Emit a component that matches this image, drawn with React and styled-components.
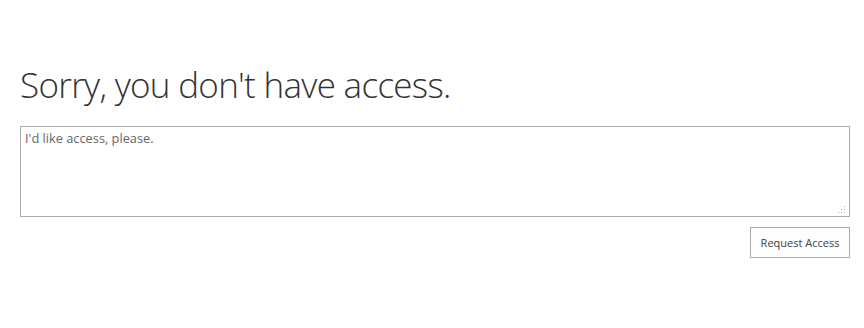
import React from "react";
import styled, { createGlobalStyle } from "styled-components";

const GlobalStyle = createGlobalStyle`
  html, body {
    margin: 0;
    padding: 0;
    background: #fff;
  }
  body {
    font-family: "Open Sans", "Liberation Sans", sans-serif;
  }
`;

const Page = styled.div`
  display: flex;
  flex-direction: column;
  width: 830px;
  padding: 64px 0 0 20px;
`;

const Title = styled.h1`
  margin: 0;
  font-size: 35px;
  line-height: 42px;
  font-weight: 300;
  color: #333;
  letter-spacing: -0.7px;
`;

const Field = styled.div`
  position: relative;
  margin-top: 20px;
  height: 91px;
`;

const Message = styled.textarea`
  box-sizing: border-box;
  display: block;
  width: 100%;
  height: 100%;
  margin: 0;
  padding: 3px 4px 2px;
  border: 1px solid #ababab;
  resize: none;
  outline: none;
  font-family: "Open Sans", "Liberation Sans", sans-serif;
  font-size: 12.8px;
  line-height: 17px;
  color: #666;
  background: #fff;
`;

const Grip = styled.svg`
  position: absolute;
  right: 5px;
  bottom: 4px;
  width: 7px;
  height: 7px;
`;

const Actions = styled.div`
  display: flex;
  justify-content: flex-end;
  margin-top: 10px;
`;

const Button = styled.button`
  box-sizing: border-box;
  width: 100px;
  height: 31px;
  padding: 0;
  border: 1px solid #ababab;
  background: #fdfdfd;
  color: #444;
  font-family: "Open Sans", "Liberation Sans", sans-serif;
  font-size: 11px;
  cursor: pointer;
`;

function App() {
  return (
    <>
      <GlobalStyle />
      <Page>
        <Title>Sorry, you don't have access.</Title>
        <Field>
          <Message defaultValue="I'd like access, please." />
          <Grip viewBox="0 0 7 7">
            <g fill="#a6a6a6">
              <rect x="6" y="0" width="1" height="1" />
              <rect x="3" y="3" width="1" height="1" />
              <rect x="6" y="3" width="1" height="1" />
              <rect x="0" y="6" width="1" height="1" />
              <rect x="3" y="6" width="1" height="1" />
              <rect x="6" y="6" width="1" height="1" />
            </g>
          </Grip>
        </Field>
        <Actions>
          <Button>Request Access</Button>
        </Actions>
      </Page>
    </>
  );
}

export default App;
